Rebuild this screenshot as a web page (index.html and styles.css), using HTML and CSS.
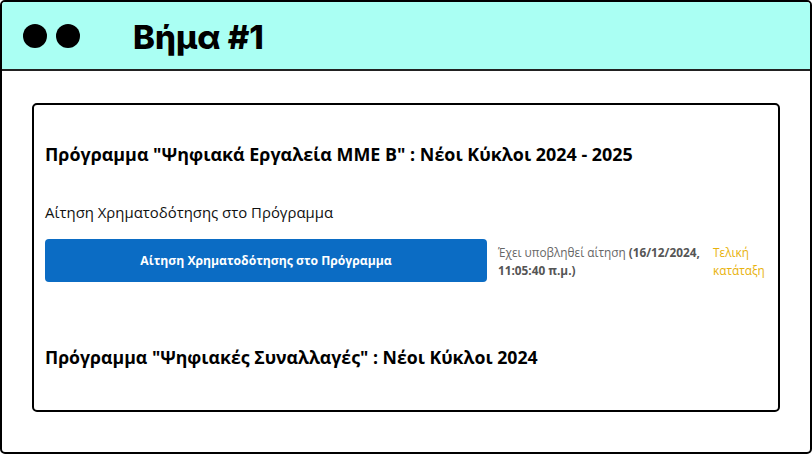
FILE: index.html
```html
<!DOCTYPE html>
<html lang="el">
<head>
<meta charset="utf-8">
<link rel="stylesheet" href="styles.css">
</head>
<body>
<div class="frame">
  <header class="top">
    <div class="dots"><span class="dot"></span><span class="dot"></span></div>
    <h1 class="title">Βήμα #1</h1>
  </header>
  <main class="content">
    <section class="card">
      <h2 class="prog">Πρόγραμμα "Ψηφιακά Εργαλεία ΜΜΕ Β" : Νέοι Κύκλοι 2024 - 2025</h2>
      <p class="label">Αίτηση Χρηματοδότησης στο Πρόγραμμα</p>
      <div class="row">
        <button class="btn">Αίτηση Χρηματοδότησης στο Πρόγραμμα</button>
        <div class="status">Έχει υποβληθεί αίτηση <b>(16/12/2024, 11:05:40 π.μ.)</b></div>
        <div class="rank">Τελική κατάταξη</div>
      </div>
      <h2 class="prog prog2">Πρόγραμμα "Ψηφιακές Συναλλαγές" : Νέοι Κύκλοι 2024</h2>
    </section>
  </main>
</div>
</body>
</html>
```

FILE: styles.css
```css
html, body {
  margin: 0;
  padding: 0;
  background: #fff;
}
.frame {
  width: 812px;
  height: 454px;
  box-sizing: border-box;
  border: 2px solid #000;
  border-radius: 5px;
  overflow: hidden;
  display: flex;
  flex-direction: column;
}
.top {
  height: 69px;
  box-sizing: border-box;
  background: #aafff3;
  border-bottom: 2px solid #222;
  display: flex;
  align-items: center;
  padding-left: 21px;
  flex-shrink: 0;
}
.dots {
  display: flex;
  gap: 9px;
  width: 110px;
}
.dot {
  width: 24px;
  height: 24px;
  border-radius: 50%;
  background: #000;
}
.title {
  margin: 0;
  font-family: Inter, "Noto Sans", sans-serif;
  font-weight: 800;
  font-size: 33px;
  letter-spacing: 0;
  color: #000;
  padding-top: 2px;
}
.content {
  padding: 32px 30px 0 30px;
}
.card {
  height: 309px;
  box-sizing: border-box;
  border: 2px solid #000;
  border-radius: 5px;
  padding: 37px 11px 0 11px;
  font-family: "Open Sans", "Noto Sans", sans-serif;
}
.prog {
  margin: 0;
  font-size: 17.9px;
  font-weight: 700;
  color: #000;
  line-height: 24px;
}
.label {
  margin: 36px 0 0 0;
  font-size: 14.9px;
  line-height: 20px;
  color: #111;
}
.row {
  display: flex;
  align-items: flex-start;
  margin-top: 17px;
}
.btn {
  width: 442px;
  height: 43px;
  flex-shrink: 0;
  background: #0b6cc4;
  color: #fff;
  border: none;
  border-radius: 4px;
  font-family: "Open Sans", "Noto Sans", sans-serif;
  font-weight: 700;
  font-size: 12.2px;
}
.status {
  width: 215px;
  flex-shrink: 0;
  margin-left: 11px;
  padding-top: 4px;
  font-size: 11.8px;
  line-height: 18px;
  color: #666;
}
.status b {
  color: #555;
}
.rank {
  width: 55px;
  flex-shrink: 0;
  padding-top: 4px;
  font-size: 11.8px;
  line-height: 18px;
  color: #e8b20c;
}
.prog2 {
  margin-top: 63px;
  font-size: 17.7px;
}
```
